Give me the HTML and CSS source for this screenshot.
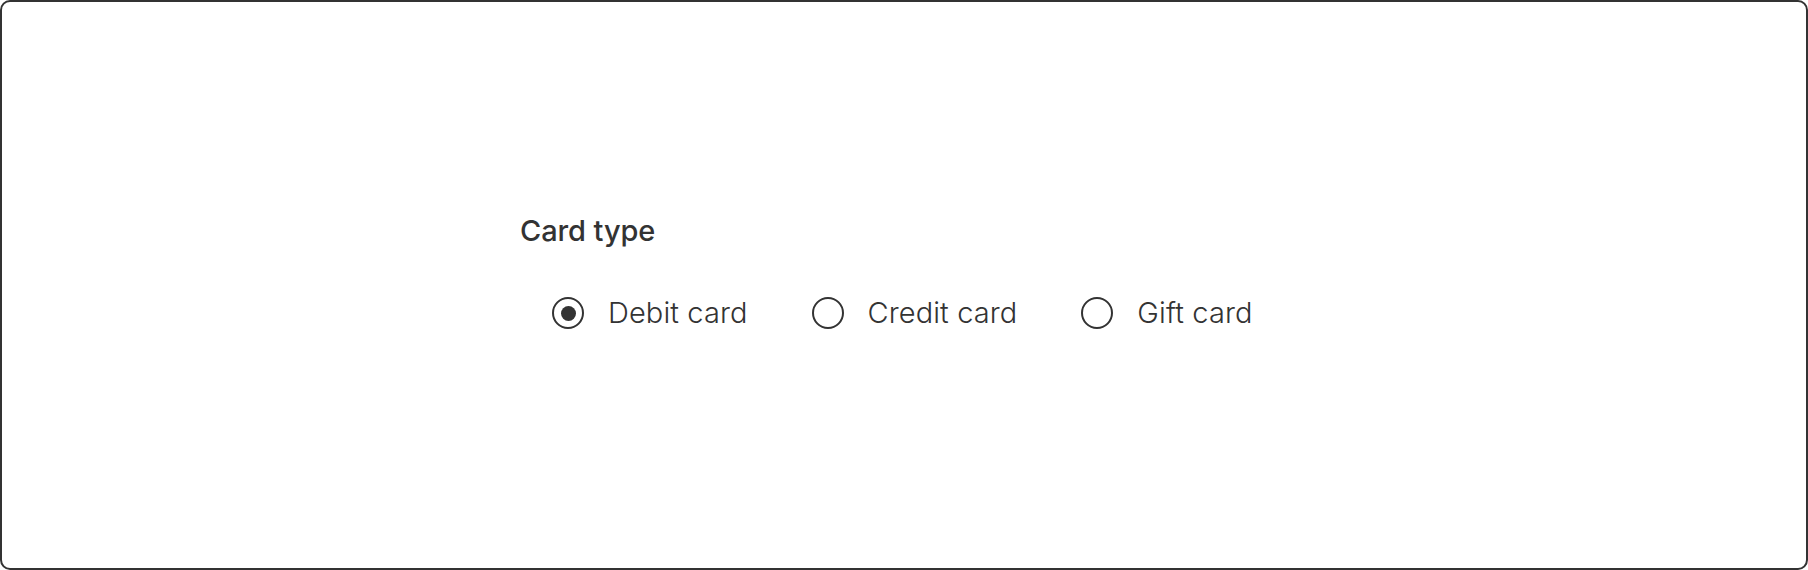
FILE: index.html
```html
<!DOCTYPE html>
<html lang="en">

<head>
    <meta charset="UTF-8">
    <meta name="viewport" content="width=device-width, initial-scale=1.0">
    <title>Card type</title>
    <link rel="stylesheet" href="styles.css">
</head>

<body>

    <div class="frame">
        <fieldset class="radio-group">
            <legend class="group-label">Card type</legend>

            <div class="options">
                <label class="option">
                    <input type="radio" name="cardType" value="debit" checked>
                    <span class="dot"></span>
                    <span class="option-text">Debit card</span>
                </label>
                <label class="option">
                    <input type="radio" name="cardType" value="credit">
                    <span class="dot"></span>
                    <span class="option-text">Credit card</span>
                </label>
                <label class="option">
                    <input type="radio" name="cardType" value="gift">
                    <span class="dot"></span>
                    <span class="option-text">Gift card</span>
                </label>
            </div>
        </fieldset>
    </div>

</body>

</html>
```

FILE: styles.css
```css
body {
    margin: 0;
    font-family: Inter, "Liberation Sans", Arial, sans-serif;
    color: #333;
    background: #fff;
}

.frame {
    height: 570px;
    box-sizing: border-box;
    border: 2px solid #333;
    border-radius: 10px;
    padding: 211px 0 0 518px;
}

.radio-group {
    border: none;
    margin: 0;
    padding: 0;
}

.group-label {
    padding: 0;
    font-size: 29px;
    line-height: 36px;
    font-weight: 500;
    letter-spacing: -0.1px;
}

.options {
    display: flex;
    gap: 64px;
    margin-top: 46px;
    padding-left: 32px;
}

.option {
    display: flex;
    align-items: center;
    gap: 24px;
    font-size: 29px;
    line-height: 36px;
    font-weight: 300;
    letter-spacing: 0.1px;
    cursor: pointer;
}

.option input {
    display: none;
}

.dot {
    width: 32px;
    height: 32px;
    box-sizing: border-box;
    border: 2px solid #333;
    border-radius: 50%;
    display: flex;
    align-items: center;
    justify-content: center;
}

.option input:checked + .dot::after {
    content: "";
    width: 15px;
    height: 15px;
    border-radius: 50%;
    background: #333;
}
```
